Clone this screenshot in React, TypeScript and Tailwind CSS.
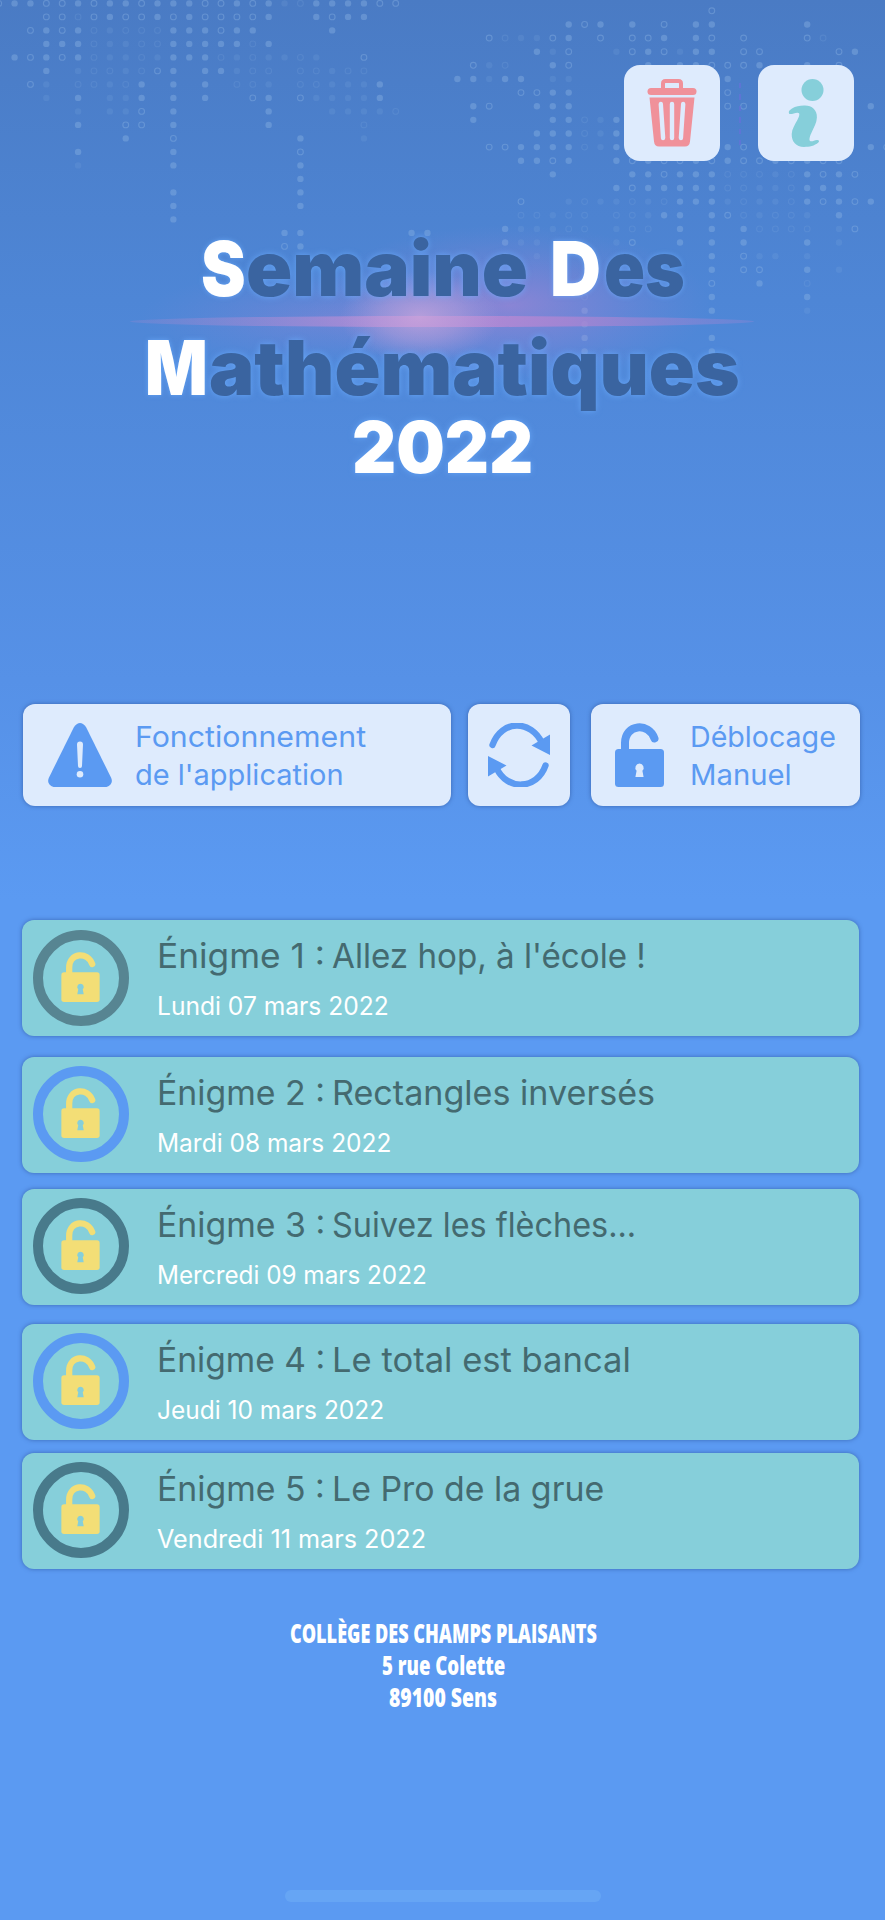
import { useLayoutEffect, useRef, useState } from "react";

type Enigme = {
  num: number;
  title: string;
  titleWidth: number;
  date: string;
  dateWidth: number;
  ring: string;
  gap: string;
};

const ENIGMES: Enigme[] = [
  { num: 1, title: "Allez hop, à l'école !", titleWidth: 314, date: "Lundi 07 mars 2022", dateWidth: 232, ring: "#578592", gap: "" },
  { num: 2, title: "Rectangles inversés", titleWidth: 323, date: "Mardi 08 mars 2022", dateWidth: 234, ring: "#5b9af2", gap: "mt-[20.5px]" },
  { num: 3, title: "Suivez les flèches...", titleWidth: 304, date: "Mercredi 09 mars 2022", dateWidth: 270, ring: "#487a8b", gap: "mt-4" },
  { num: 4, title: "Le total est bancal", titleWidth: 299, date: "Jeudi 10 mars 2022", dateWidth: 227, ring: "#5b9af2", gap: "mt-[19px]" },
  { num: 5, title: "Le Pro de la grue", titleWidth: 272, date: "Vendredi 11 mars 2022", dateWidth: 269, ring: "#487a8b", gap: "mt-[13px]" },
];

// X = dot, O = ring, lower case = faint
const LEFT_DOTS = [
  "OXXOOXOXXOXXXOOXOXxoXXXXOO",
  "...OOoOXOOXOXOOOOX..XOXX",
  "..OXOXoxoooXXXOXX....X",
  "...XXXoxxooXXXXXoX",
  ".XOXOXoxxoxXXXoxoxxox..O",
  "...X.xooxoOX.XXxoo.ooxoo",
  "..Ox.ooxoX.X.X.oox.ooxxxX",
  "...x.X.xxX.X.X..OX.OxxxxX",
  ".....x.xxO.X.....X...xxxxo",
  ".....X..OO.X.....X.....o",
  "........X..O.......X...x",
  ".....X.....X.......O",
  ".....x.....X.......X",
  "...................X",
  "...........X.......X",
  "...........X.......X",
  "...........X",
  "..................XX......XX",
  "..................OX",
];

const RIGHT_DOTS = [
  "................O",
  ".......XOX.X.O.XX.....X",
  "..OoxxOX.O.OOX.XO.O...Oo",
  ".....XxO..xOXOxXX.OO....OX",
  ".Oxo..XO....X.XXOOOX..X.O",
  "XXxXX.xx.........X",
  "....OOXX.........O",
  ".XO..XXX.........OO.......X",
  ".X....XXoxX",
  ".....XXXoxX",
  "..OOXXXXoxX......XO.......XO",
  "....XXOX..XOXOOXOXOOXOXOO",
  "......X....XXOXXXoooxoXOXO",
  "..........XOXXXXXooxxoXXX",
  "....O..xoxxoxoXXXxoxxoXOXOX",
  "....ooxoo.ooxXX.XOoxoox.X",
  "...Xxxxoo.xoo.X.X.Xoooo.xO",
  "...Xxx....xO..X.X.X...X.x",
  "...o.x..........X.Oxx.x",
  "................X.OO..X.x",
  "................O..X..o",
  "........o.......X.....X",
  "........X.......X.....x",
  "........X",
  "........X.......X",
  "........X.......X",
];

function DotField({ rows, x0, y0, dx, dy }: { rows: string[]; x0: number; y0: number; dx: number; dy: number }) {
  return (
    <g>
      {rows.flatMap((row, r) =>
        row.split("").map((ch, c) => {
          if (ch === ".") return null;
          const faint = ch === ch.toLowerCase();
          const cx = x0 + c * dx;
          const cy = y0 + r * dy;
          return ch.toUpperCase() === "X" ? (
            <circle key={`${r}-${c}`} cx={cx} cy={cy} r={3.2} fill="#8cb4e4" opacity={faint ? 0.15 : 0.4} />
          ) : (
            <circle key={`${r}-${c}`} cx={cx} cy={cy} r={2.9} fill="none" stroke="#8cb4e4" strokeWidth={1.1} opacity={faint ? 0.18 : 0.4} />
          );
        }),
      )}
    </g>
  );
}

function Backdrop() {
  return (
    <svg className="pointer-events-none absolute inset-0" width="885" height="500" viewBox="0 0 885 500">
      <defs>
        <radialGradient id="halo">
          <stop offset="0" stopColor="#b584d4" stopOpacity="0.58" />
          <stop offset="0.5" stopColor="#a883d6" stopOpacity="0.28" />
          <stop offset="1" stopColor="#8a86d8" stopOpacity="0" />
        </radialGradient>
        <radialGradient id="core">
          <stop offset="0" stopColor="#cba6dc" stopOpacity="0.75" />
          <stop offset="0.5" stopColor="#c2a2dc" stopOpacity="0.45" />
          <stop offset="1" stopColor="#b49cdc" stopOpacity="0" />
        </radialGradient>
        <linearGradient id="streak">
          <stop offset="0" stopColor="#9488d2" stopOpacity="0.3" />
          <stop offset="0.45" stopColor="#c78fd6" stopOpacity="0.75" />
          <stop offset="0.7" stopColor="#b085d2" stopOpacity="0.75" />
          <stop offset="1" stopColor="#7f86d6" stopOpacity="0.5" />
        </linearGradient>
      </defs>
      <DotField rows={LEFT_DOTS} x0={-1.3} y0={3.4} dx={15.88} dy={13.5} />
      <DotField rows={RIGHT_DOTS} x0={457.4} y0={10.8} dx={15.9} dy={13.63} />
      <path d="M740 83v5M740 94v6M740 106v5M740 117v6M740 129v5M740 140v5" stroke="#6a6fdc" strokeWidth="1.6" opacity="0.75" />
      <ellipse cx="330" cy="318" rx="190" ry="50" fill="url(#halo)" opacity="0.5" />
      <ellipse cx="510" cy="305" rx="200" ry="80" fill="url(#halo)" />
      <ellipse cx="442" cy="321.5" rx="312" ry="5.5" fill="url(#streak)" />
      <ellipse cx="420" cy="317" rx="80" ry="46" fill="url(#core)" />
    </svg>
  );
}

// Stretches a single line of text so it fills the given width
function Fit({ width, className = "", children }: { width: number; className?: string; children: string }) {
  const ref = useRef<HTMLSpanElement>(null);
  const [scale, setScale] = useState(1);

  useLayoutEffect(() => {
    if (ref.current) setScale(width / ref.current.offsetWidth);
  }, [width, children]);

  return (
    <span className={`block ${className}`} style={{ width }}>
      <span ref={ref} className="inline-block origin-left whitespace-nowrap" style={{ transform: `scaleX(${scale})` }}>
        {children}
      </span>
    </span>
  );
}

function TrashIcon() {
  return (
    <svg width="50" height="68" viewBox="0 0 50 68" fill="#f0919a">
      <path d="M16 10V4.500Q16 2 18.500 2H31.500Q34 2 34 4.500V10" fill="none" stroke="#f0919a" strokeWidth="4" />
      <rect x="0.500" y="9" width="49" height="7" rx="3.500" />
      <path d="M2.500 18.500h45L43 62.500q-.5 5-5 5H12q-4.500 0-5-5z" />
      <path d="M13.800 25l2.300 34M25 25v34M36.200 25l-2.300 34" stroke="#deebfd" strokeWidth="4.400" strokeLinecap="round" />
    </svg>
  );
}

function InfoIcon() {
  return (
    <svg width="36" height="68" viewBox="0 0 36 68" fill="#86cfda">
      <circle cx="24.500" cy="11" r="11" />
      <path d="M1 34.500C.2 32.500 1.500 31 4 29.500 8 27 12 26.400 17 26.500c7 0 12.200 4.500 11.900 12-.2 5-2.700 9.500-5.100 14.500-1.700 3.600-3.500 8.500-1.300 9.200 1.700.5 4-.8 6.300-1.200 2-.3 3 1.200 1.500 2.600C26.500 67 21.500 68 16 68 8 68 3.500 62.500 3.700 55c.2-5 3.300-9.500 5.400-13.500C11.500 37 12.500 33.500 9.300 33.700 6.500 33.900 2 36 1 34.500z" />
    </svg>
  );
}

function WarningIcon() {
  return (
    <svg className="shrink-0" width="64" height="64" viewBox="0 0 64 64">
      <path d="M26 4Q32-3.800 38 4L63 54.500q3 6.500-4.500 9.500h-53Q-2 61 1 54.500z" fill="#5b9af2" />
      <path d="M29 21.500a3 3 0 0 1 6 0L34 43a2 2 0 0 1-4 0z" fill="#deebfd" />
      <circle cx="32" cy="51.200" r="3.300" fill="#deebfd" />
    </svg>
  );
}

function SyncIcon() {
  return (
    <svg width="62" height="64" viewBox="0 0 62 64">
      <path d="M4.500 22C14-4 43-3 54 20M57.500 42.500C49 67 19 68 8.500 45" fill="none" stroke="#5b9af2" strokeWidth="6.400" strokeLinecap="round" />
      <path d="M62 11.500V32L43.500 22.500zM0 33v20.500L18.500 42.500z" fill="#5b9af2" />
    </svg>
  );
}

function LockIcon({ color, hole, width, height, className = "" }: { color: string; hole: string; width: number; height: number; className?: string }) {
  return (
    <svg className={`shrink-0 ${className}`} width={width} height={height} viewBox="0 0 49 64">
      <path d="M10 30V20C10 1 34 -1 39.500 15.500" fill="none" stroke={color} strokeWidth="8" strokeLinecap="round" />
      <rect y="26" width="49" height="38" rx="3.500" fill={color} />
      <path d="M24.500 40.500a4.200 4.200 0 0 1 2.900 7.200l1.200 6.300h-8.200l1.200-6.300a4.200 4.200 0 0 1 2.900-7.200z" fill={hole} />
    </svg>
  );
}

const panel = "rounded-xl bg-[#deebfd] shadow-[0_0_4px_rgba(38,72,140,0.6)]";
const glow = "[text-shadow:0_0_6px_rgba(110,175,255,0.75)]";

export default function App() {
  return (
    <main className="relative flex h-[1920px] w-[885px] flex-col overflow-hidden bg-[linear-gradient(180deg,#4a7bc4_0px,#4e86d6_300px,#5691e7_680px,#5b9af2_900px)] font-['Inter','Noto_Sans',sans-serif]">
      <Backdrop />

      <div className="relative flex h-[161px] items-end justify-end gap-[38px] pr-[31px]">
        <button className="flex size-24 items-center justify-center rounded-2xl bg-[#deebfd]">
          <TrashIcon />
        </button>
        <button className="flex size-24 items-center justify-center rounded-2xl bg-[#deebfd]">
          <InfoIcon />
        </button>
      </div>

      <h1 className={`relative mt-[67px] flex flex-col text-[76px] leading-[80px] font-black text-[#3a64a0] ${glow}`}>
        <span className="flex pl-[201px]">
          <Fit width={45} className="text-white">S</Fit>
          <Fit width={282}>emaine</Fit>
          <Fit width={51} className="ml-[22px] text-white">D</Fit>
          <Fit width={81} className="ml-[3px]">es</Fit>
        </span>
        <span className="mt-[19px] flex pl-[145px]">
          <Fit width={63} className="text-white">M</Fit>
          <Fit width={531} className="ml-px">athématiques</Fit>
        </span>
        <span className="flex pl-[352px] text-[71px] text-white">
          <Fit width={181}>2022</Fit>
        </span>
      </h1>

      {/* Toolbar */}
      <div className="relative mt-[217px] flex h-[102px] pl-[23px] text-[29px] leading-[38px] text-[#5b9af2]">
        <button className={`flex w-[428px] items-center pl-[25px] text-left ${panel}`}>
          <WarningIcon />
          <span className="ml-[23px] pt-px">
            <Fit width={231}>Fonctionnement</Fit>
            <Fit width={209}>de l'application</Fit>
          </span>
        </button>
        <button className={`ml-[17px] flex w-[102px] items-center justify-center ${panel}`}>
          <SyncIcon />
        </button>
        <button className={`ml-[21px] flex w-[269px] items-center pl-[24px] text-left ${panel}`}>
          <LockIcon color="#5b9af2" hole="#deebfd" width={49} height={64} />
          <span className="ml-[26px] pt-px">
            <Fit width={146}>Déblocage</Fit>
            <Fit width={102}>Manuel</Fit>
          </span>
        </button>
      </div>

      <ul className="relative mt-[114px] flex flex-col pl-[21.5px]">
        {ENIGMES.map((e) => (
          <li
            key={e.num}
            className={`flex h-[116px] w-[837px] items-center rounded-xl bg-[#86cfda] pl-[11px] shadow-[0_0_4px_rgba(38,72,140,0.6)] ${e.gap}`}
          >
            <div className="mb-px flex size-24 shrink-0 items-center justify-center rounded-full border-[10px]" style={{ borderColor: e.ring }}>
              <LockIcon className="mb-[2px]" color="#f3de76" hole="#86cfda" width={39} height={50} />
            </div>
            <div className="ml-[28.500px] flex h-full flex-col pt-4">
              <div className="flex gap-[7px] text-[34px] leading-10 text-[#446a70]">
                <Fit width={168}>{`Énigme ${e.num} :`}</Fit>
                <Fit width={e.titleWidth}>{e.title}</Fit>
              </div>
              <Fit width={e.dateWidth} className="mt-[15px] text-[25px] leading-[30px] text-white">{e.date}</Fit>
            </div>
          </li>
        ))}
      </ul>

      <address className="relative mt-[48px] flex flex-col items-center pl-px font-['Open_Sans','Noto_Sans',sans-serif] text-[26px] leading-[32.300px] font-extrabold text-white not-italic">
        <Fit width={307}>COLLÈGE DES CHAMPS PLAISANTS</Fit>
        <Fit width={123}>5 rue Colette</Fit>
        <Fit width={108}>89100 Sens</Fit>
      </address>

      <div className="relative mt-auto mb-[18px] ml-[285px] h-3 w-[316px] rounded-full bg-[#66a5f4]" />
    </main>
  );
}
